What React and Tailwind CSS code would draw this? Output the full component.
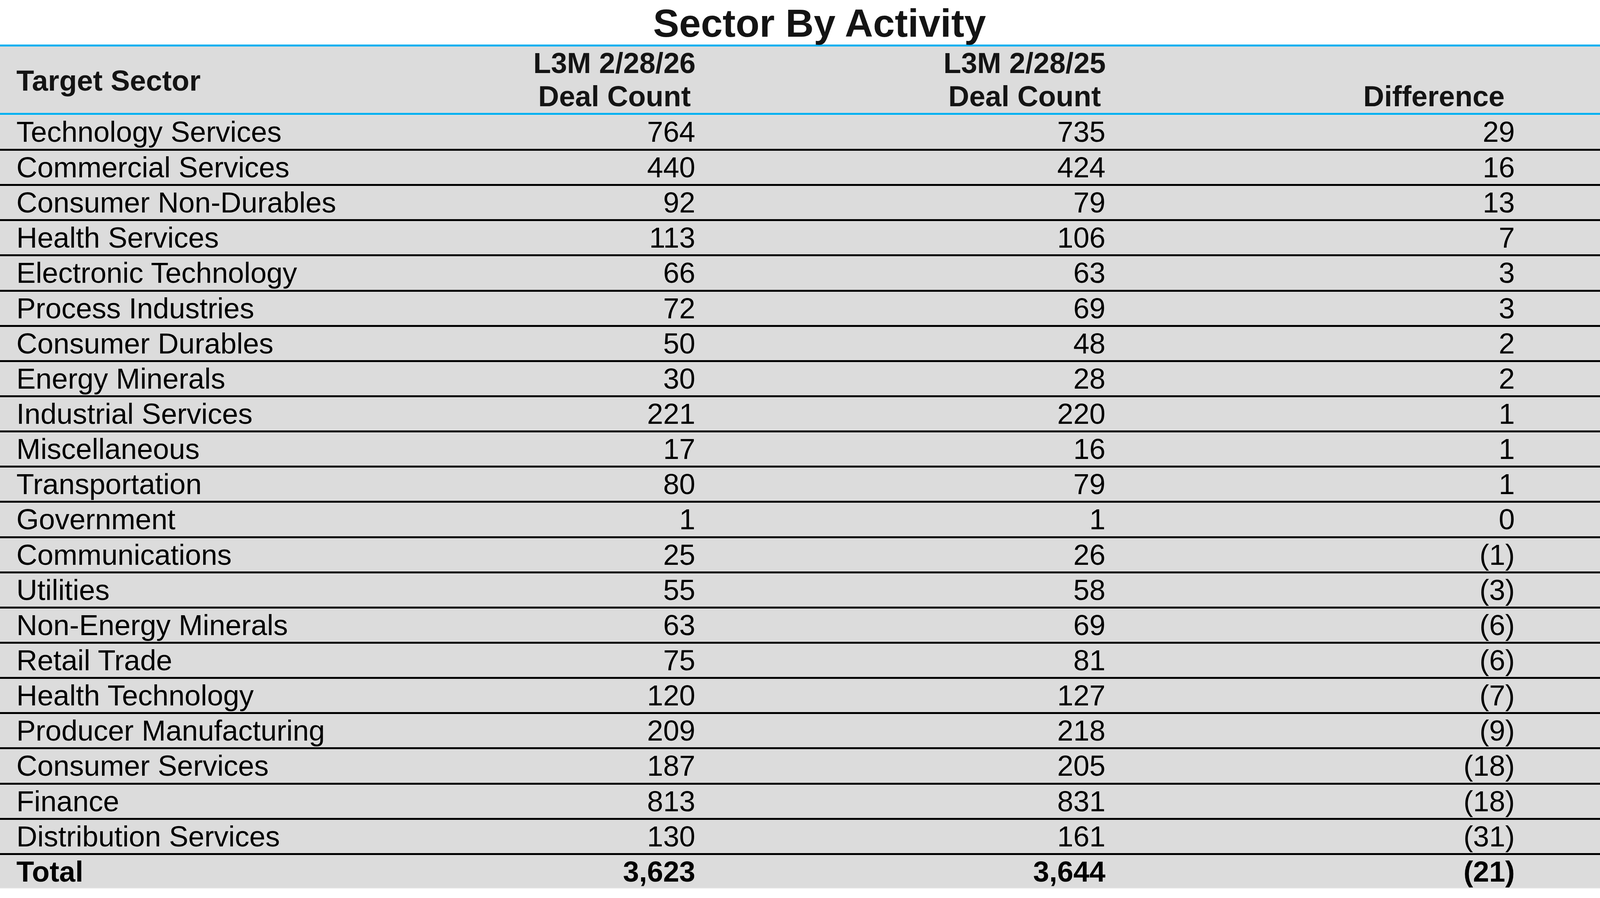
import React from 'react';

const rows = [
  ['Technology Services', '764', '735', '29'],
  ['Commercial Services', '440', '424', '16'],
  ['Consumer Non-Durables', '92', '79', '13'],
  ['Health Services', '113', '106', '7'],
  ['Electronic Technology', '66', '63', '3'],
  ['Process Industries', '72', '69', '3'],
  ['Consumer Durables', '50', '48', '2'],
  ['Energy Minerals', '30', '28', '2'],
  ['Industrial Services', '221', '220', '1'],
  ['Miscellaneous', '17', '16', '1'],
  ['Transportation', '80', '79', '1'],
  ['Government', '1', '1', '0'],
  ['Communications', '25', '26', '(1)'],
  ['Utilities', '55', '58', '(3)'],
  ['Non-Energy Minerals', '63', '69', '(6)'],
  ['Retail Trade', '75', '81', '(6)'],
  ['Health Technology', '120', '127', '(7)'],
  ['Producer Manufacturing', '209', '218', '(9)'],
  ['Consumer Services', '187', '205', '(18)'],
  ['Finance', '813', '831', '(18)'],
  ['Distribution Services', '130', '161', '(31)'],
];

function Row({ cells, first, bold }) {
  const h = first ? 'h-[87px]' : bold ? 'h-[89px] border-t-[5px] border-black' : 'h-[90.15px] border-t-[5px] border-black';
  return (
    <div className={`grid grid-cols-[1366px_1050px_1048px_1fr] items-center ${h} ${bold ? 'font-bold' : ''} shadow-[inset_0_1px_0_#e8e8e8]`}>
      <div className="pl-[42px] whitespace-nowrap">{cells[0]}</div>
      <div className="w-[414px] text-right">{cells[1]}</div>
      <div className="w-[414px] text-right">{cells[2]}</div>
      <div className="w-[414px] text-right">{cells[3]}</div>
    </div>
  );
}

function HeadCell({ lines }) {
  return (
    <div className="w-[414px] h-full flex flex-col items-center justify-end whitespace-nowrap">
      {lines.map((l) => (
        <div key={l}>{l}</div>
      ))}
    </div>
  );
}

export default function App() {
  return (
    <div className="bg-white min-h-screen text-black" style={{ fontFamily: '"Liberation Sans", Arial, sans-serif' }}>
      <div className="w-[4196px]">
        <div className="h-[114px] text-center font-bold text-[100px] leading-[118px] text-[#141414] whitespace-nowrap">
          Sector By Activity
        </div>
        <div className="bg-[#dcdcdc] border-t-[5px] border-[#00b0f0] border-r-2 border-r-[#ececec] border-b-2 border-b-[#ececec] text-[74px] leading-[85px]">
          <div className="grid grid-cols-[1366px_1050px_1048px_1fr] h-[175px] border-b-[5px] border-[#00b0f0] font-bold text-[#141414]">
            <div className="pl-[42px] pt-[4px] flex items-center whitespace-nowrap">Target Sector</div>
            <HeadCell lines={['L3M 2/28/26', 'Deal Count']} />
            <HeadCell lines={['L3M 2/28/25', 'Deal Count']} />
            <HeadCell lines={['Difference']} />
          </div>
          {rows.map((r, i) => (
            <Row key={r[0]} cells={r} first={i === 0} />
          ))}
          <Row cells={['Total', '3,623', '3,644', '(21)']} bold />
        </div>
      </div>
    </div>
  );
}
